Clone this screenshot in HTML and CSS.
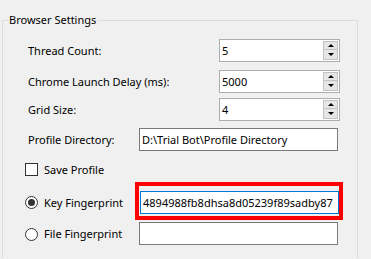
FILE: index.html
```
<!DOCTYPE html>
<html>
<head>
<meta charset="utf-8">
<link rel="stylesheet" href="styles.css">
</head>
<body>
<div class="group">
  <div class="title">Browser Settings</div>
  <div class="rows">
    <div class="row r1">
      <span class="label wide">Thread Count:</span>
      <div class="numeric"><span class="val">5</span><div class="spin"><span class="btn up"></span><span class="btn down"></span></div></div>
    </div>
    <div class="row r2">
      <span class="label wide">Chrome Launch Delay (ms):</span>
      <div class="numeric"><span class="val">5000</span><div class="spin"><span class="btn up"></span><span class="btn down"></span></div></div>
    </div>
    <div class="row r3">
      <span class="label wide">Grid Size:</span>
      <div class="numeric"><span class="val">4</span><div class="spin"><span class="btn up"></span><span class="btn down"></span></div></div>
    </div>
    <div class="row r4">
      <span class="label narrow">Profile Directory:</span>
      <div class="text">D:\Trial Bot\Profile Directory</div>
    </div>
    <div class="row r5 opt">
      <span class="check"></span>
      <span class="optlabel">Save Profile</span>
    </div>
    <div class="row r6 opt">
      <span class="radio on"></span>
      <span class="optlabel radlabel">Key Fingerprint</span>
      <div class="highlight"><div class="text focus">4894988fb8dhsa8d05239f89sadby87</div></div>
    </div>
    <div class="row r7 opt">
      <span class="radio"></span>
      <span class="optlabel radlabel2">File Fingerprint</span>
      <div class="text"></div>
    </div>
  </div>
</div>
</body>
</html>
```
FILE: styles.css
```
html, body {
  margin: 0;
  padding: 0;
  background: #f0f0f0;
  width: 371px;
  height: 259px;
  overflow: hidden;
}
body {
  font-family: "Noto Sans", "Open Sans", sans-serif;
  font-size: 11px;
  color: #000;
}
.group {
  margin: 20px 0 0 2px;
  width: 356px;
  height: 238px;
  box-sizing: border-box;
  border: 1px solid #dcdcdc;
  border-bottom: none;
}
.title {
  width: fit-content;
  margin: -9px 0 0 5px;
  padding: 0 1px;
  line-height: 16px;
  background: #f0f0f0;
}
.rows {
  margin-top: 11px;
  display: grid;
  grid-template-rows: 31px 28px 30px 28px 26px 40px 23px;
}
.row {
  display: flex;
  align-items: flex-start;
  padding-left: 25px;
}
.row.opt {
  padding-left: 22px;
  align-items: center;
}
.r7.opt { align-items: flex-start; }
.label {
  line-height: 23px;
  white-space: nowrap;
}
.label.wide { width: 191px; }
.label.narrow { width: 111px; }
.numeric {
  width: 121px;
  height: 23px;
  box-sizing: border-box;
  border: 1px solid #adadad;
  background: #fff;
  padding: 1px;
  display: flex;
}
.val {
  flex: 1;
  line-height: 19px;
  padding-left: 1px;
}
.spin {
  width: 15px;
  display: flex;
  flex-direction: column;
}
.btn {
  display: flex;
  align-items: center;
  justify-content: center;
  box-sizing: border-box;
  background: #e6e6e6;
  border: 1px solid #c2c2c2;
}
.btn.up { height: 9px; }
.btn.down { height: 10px; border-top: none; }
.btn.up::after {
  content: "";
  border-left: 3px solid transparent;
  border-right: 3px solid transparent;
  border-bottom: 3px solid #000;
}
.btn.down::after {
  content: "";
  border-left: 3px solid transparent;
  border-right: 3px solid transparent;
  border-top: 3px solid #000;
}
.text {
  width: 199px;
  height: 23px;
  box-sizing: border-box;
  border: 1px solid #7a7a7a;
  background: #fff;
  padding-left: 2px;
  line-height: 21px;
  white-space: nowrap;
  overflow: hidden;
}
.text.focus {
  border-color: #0078d7;
  padding-left: 2px;
}
.check {
  width: 13px;
  height: 13px;
  box-sizing: border-box;
  border: 1px solid #333;
  background: #fff;
  flex: none;
}
.radio {
  width: 13px;
  height: 13px;
  box-sizing: border-box;
  border: 1px solid #333;
  border-radius: 50%;
  background: #fff;
  flex: none;
  display: flex;
  align-items: center;
  justify-content: center;
}
.r7 .radio { margin-top: 6px; }
.radio.on::after {
  content: "";
  width: 7px;
  height: 7px;
  border-radius: 50%;
  background: #333;
}
.optlabel {
  margin-left: 6px;
  white-space: nowrap;
}
.radlabel { width: 91px; }
.radlabel2 { width: 95px; line-height: 23px; }
.highlight {
  width: 208px;
  height: 38px;
  box-sizing: border-box;
  border: 4px solid #ff0000;
  padding: 5px 0 2px 1px;
  margin-top: -2px;
}
```
